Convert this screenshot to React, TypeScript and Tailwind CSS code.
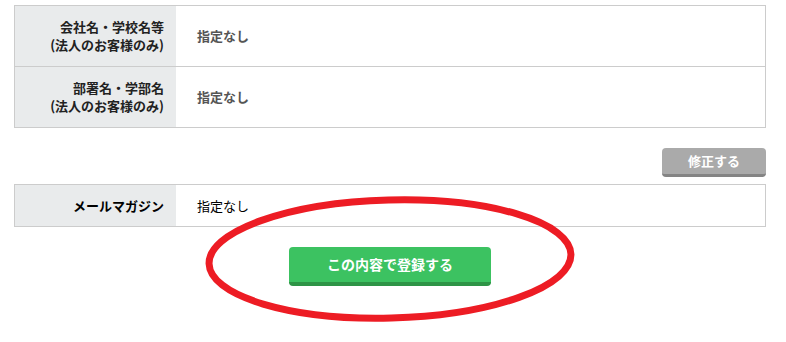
// Confirmation page — registration summary with annotated submit button

const FONT = { fontFamily: '"Noto Sans CJK JP", "Noto Sans", sans-serif' };

const companyRows = [
  { label: ["会社名・学校名等", "(法人のお客様のみ)"], value: "指定なし" },
  { label: ["部署名・学部名", "(法人のお客様のみ)"], value: "指定なし" },
];

export default function App() {
  return (
    <div className="relative w-[786px] h-[342px] bg-white overflow-hidden" style={FONT}>
      <div className="w-[752px] ml-[14px] pt-[5px]">
        {/* company info table */}
        <div className="border border-[#cccccc]">
          {companyRows.map((row, i) => (
            <div
              key={i}
              className={
                i > 0
                  ? "grid grid-cols-[161px_1fr] h-[61px] border-t border-[#cccccc]"
                  : "grid grid-cols-[161px_1fr] h-[60px]"
              }
            >
              <div className="bg-[#e9ebec] flex flex-col items-end justify-center pr-[12px] text-[13px] font-bold leading-[18px] text-[#222]">
                {row.label.map((l) => (
                  <span key={l}>{l}</span>
                ))}
              </div>
              <div className="flex items-center pl-[21px] text-[13px] font-bold text-[#555]">
                {row.value}
              </div>
            </div>
          ))}
        </div>

        <div className="flex justify-end mt-[20px]">
          <button className="w-[104px] h-[29px] rounded-[4px] bg-[#aaaaaa] border-b-[3px] border-[#848484] text-white text-[13px] font-bold">
            修正する
          </button>
        </div>

        {/* newsletter */}
        <div className="mt-[7px] border border-[#cccccc] grid grid-cols-[161px_1fr] h-[43px]">
          <div className="bg-[#e9ebec] flex items-center justify-end pr-[12px] text-[13px] font-bold text-black">
            メールマガジン
          </div>
          <div className="flex items-center pl-[21px] text-[13px] text-black">指定なし</div>
        </div>

        <div className="flex justify-center mt-[20px]">
          <button className="w-[202px] h-[39px] rounded-[4px] bg-[#3cc261] border-b-[4px] border-[#2e9446] text-white text-[14px] font-bold">
            この内容で登録する
          </button>
        </div>
      </div>

      {/* hand-drawn red annotation */}
      <svg className="absolute left-0 top-0 pointer-events-none" width="786" height="342">
        <ellipse
          cx="390"
          cy="259"
          rx="181"
          ry="59"
          fill="none"
          stroke="#ed1c24"
          strokeWidth="7"
          transform="rotate(-1.5 390 259)"
        />
      </svg>
    </div>
  );
}
